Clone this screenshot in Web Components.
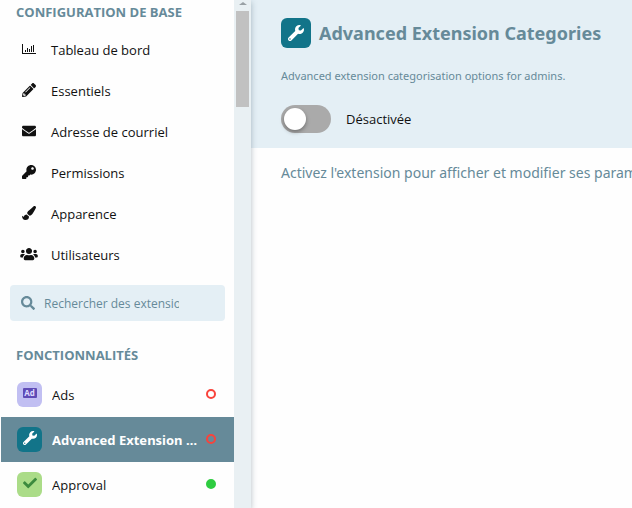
<!DOCTYPE html>
<html lang="fr">
<head>
<meta charset="utf-8">
<meta name="viewport" content="width=device-width, initial-scale=1">
<title>Advanced Extension Categories</title>
<style>
  :root {
    --muted: #668a99;
    --control: #e4eff5;
    --text: #111;
    --off: #f9433b;
    --on: #2ecc40;
  }
  body {
    margin: 0;
    background: #fefefe;
    color: var(--text);
    font: 13px/20px "Open Sans", "Noto Sans", sans-serif;
  }
</style>
</head>
<body>
<admin-page>
  <admin-sidebar slot="nav">
    <nav-title>Configuration de base</nav-title>
    <nav-link icon="chart">Tableau de bord</nav-link>
    <nav-link icon="pencil">Essentiels</nav-link>
    <nav-link icon="envelope">Adresse de courriel</nav-link>
    <nav-link icon="key">Permissions</nav-link>
    <nav-link icon="brush">Apparence</nav-link>
    <nav-link icon="users">Utilisateurs</nav-link>
    <search-box placeholder="Rechercher des extensions"></search-box>
    <nav-title>Fonctionnalités</nav-title>
    <extension-link icon="ad" style="--tile: #c1bff2; --glyph: #5f4bb6">Ads</extension-link>
    <extension-link icon="wrench" active style="--tile: #127489; --glyph: #fff">Advanced Extension Categories</extension-link>
    <extension-link icon="check" enabled style="--tile: #abdc88; --glyph: #3c8a3e">Approval</extension-link>
  </admin-sidebar>
  <extension-header>
    <span slot="title">Advanced Extension Categories</span>
    <span slot="description">Advanced extension categorisation options for admins.</span>
    <toggle-switch slot="controls">Désactivée</toggle-switch>
  </extension-header>
  <extension-notice>Activez l'extension pour afficher et modifier ses paramètres.</extension-notice>
</admin-page>

<script>
const ICONS = {
  chart: ["0 0 14 14", '<path d="M0 2h1v9h13v1H0zM3 8h1v2H3zM5 6h1v4H5zM7 7h1v3H7zM9 4h1v6H9zM11 3h1v7h-1z"/>'],
  pencil: ["0 0 512 512", '<path d="M497.9 142.1l-46.1 46.1c-4.7 4.7-12.3 4.7-17 0l-111-111c-4.7-4.7-4.7-12.3 0-17l46.1-46.1c18.7-18.7 49.1-18.7 67.9 0l60.1 60.1c18.8 18.7 18.8 49.1 0 67.9zM284.2 99.8L21.6 362.4.4 483.9c-2.9 16.4 11.4 30.6 27.8 27.8l121.5-21.3 262.6-262.6c4.7-4.7 4.7-12.3 0-17l-111-111c-4.8-4.7-12.4-4.7-17.1 0zM124.1 339.9c-5.5-5.5-5.5-14.3 0-19.8l154-154c5.5-5.5 14.3-5.5 19.8 0s5.5 14.3 0 19.8l-154 154c-5.5 5.5-14.3 5.5-19.8 0zM88 424h48v36.3l-64.5 11.3-31.1-31.1L51.7 376H88v48z"/>'],
  envelope: ["0 0 512 512", '<path d="M502.3 190.8c3.9-3.1 9.7-.2 9.7 4.7V400c0 26.5-21.5 48-48 48H48c-26.5 0-48-21.5-48-48V195.6c0-5 5.7-7.8 9.7-4.7 22.4 17.4 52.1 39.5 154.1 113.6 21.1 15.4 56.7 47.8 92.2 47.6 35.7.3 72-32.8 92.3-47.6 102-74.1 131.6-96.3 154-113.7zM256 320c23.2.4 56.6-29.2 73.4-41.4 132.7-96.3 142.8-104.7 173.4-128.7 5.8-4.5 9.2-11.5 9.2-18.9v-19c0-26.5-21.5-48-48-48H48c-26.5 0-48 21.5-48 48v19c0 7.4 3.4 14.3 9.2 18.9 30.6 23.9 40.7 32.4 173.4 128.7 16.8 12.2 50.2 41.8 73.4 41.4z"/>'],
  key: ["0 0 512 512", '<path d="M512 176.001C512 273.203 433.202 352 336 352c-11.22 0-22.19-1.062-32.827-3.069l-24.012 27.014A23.999 23.999 0 0 1 261.223 384H224v40c0 13.255-10.745 24-24 24h-40v40c0 13.255-10.745 24-24 24H24c-13.255 0-24-10.745-24-24v-78.059c0-6.365 2.529-12.47 7.029-16.971l161.802-161.802C163.108 213.814 160 195.271 160 176 160 78.798 238.797.001 335.999 0 433.488-.001 512 78.511 512 176.001zM336 128c0 26.51 21.49 48 48 48s48-21.49 48-48-21.49-48-48-48-48 21.49-48 48z"/>'],
  brush: ["0 0 512 512", '<path d="M167.02 309.34c-40.12 2.58-76.53 17.86-97.19 72.3-2.35 6.21-8 9.98-14.59 9.98-11.11 0-45.46-27.67-55.25-34.35C0 439.62 37.93 512 128 512c75.86 0 128-43.77 128-120.19 0-3.11-.65-6.08-.97-9.13l-88.01-73.34zM457.89 0c-15.16 0-29.37 6.71-40.21 16.45C213.27 199.05 192 203.34 192 257.09c0 13.7 3.25 26.76 8.73 38.7l63.82 53.18c7.21 1.8 14.64 3.03 22.39 3.03 62.11 0 98.11-45.47 211.16-256.46 7.38-14.35 13.9-29.85 13.9-45.99C512 20.64 486 0 457.89 0z"/>'],
  users: ["0 0 640 512", '<path d="M96 224c35.3 0 64-28.7 64-64s-28.7-64-64-64-64 28.7-64 64 28.7 64 64 64zm448 0c35.3 0 64-28.7 64-64s-28.7-64-64-64-64 28.7-64 64 28.7 64 64 64zm32 32h-64c-17.6 0-33.5 7.1-45.1 18.6 40.3 22.1 68.9 62 75.1 109.4h66c17.7 0 32-14.3 32-32v-32c0-35.3-28.7-64-64-64zm-256 0c61.9 0 112-50.1 112-112S381.9 32 320 32 208 82.1 208 144s50.1 112 112 112zm76.8 32h-8.3c-20.8 10-43.9 16-68.5 16s-47.6-6-68.5-16h-8.3C179.6 288 128 339.6 128 403.2V432c0 26.5 21.5 48 48 48h288c26.5 0 48-21.5 48-48v-28.8c0-63.6-51.6-115.2-115.2-115.2zm-223.7-13.4C161.5 263.1 145.6 256 128 256H64c-35.3 0-64 28.7-64 64v32c0 17.7 14.3 32 32 32h65.9c6.3-47.4 34.9-87.3 75.2-109.4z"/>'],
  search: ["0 0 512 512", '<path d="M505 442.7L405.3 343c-4.5-4.5-10.6-7-17-7H372c27.6-35.3 44-79.7 44-128C416 93.1 322.9 0 208 0S0 93.1 0 208s93.1 208 208 208c48.3 0 92.7-16.4 128-44v16.3c0 6.4 2.5 12.5 7 17l99.7 99.7c9.4 9.4 24.6 9.4 33.9 0l28.3-28.3c9.4-9.4 9.4-24.6.1-34zM208 336c-70.7 0-128-57.2-128-128 0-70.7 57.2-128 128-128 70.7 0 128 57.2 128 128 0 70.7-57.2 128-128 128z"/>'],
  wrench: ["0 0 512 512", '<path d="M507.73 109.1c-2.24-9.03-13.54-12.09-20.12-5.51l-74.36 74.36-67.88-11.31-11.31-67.88 74.36-74.36c6.62-6.62 3.43-17.9-5.66-20.16-47.38-11.74-99.55.91-136.58 37.93-39.64 39.64-50.55 97.1-34.05 147.2L18.74 402.76c-24.99 24.99-24.99 65.51 0 90.5 24.99 24.99 65.51 24.99 90.5 0l213.21-213.21c50.12 16.71 107.47 5.68 147.37-34.22 37.07-37.07 49.7-89.32 37.91-136.73zM64 472c-13.25 0-24-10.75-24-24 0-13.26 10.75-24 24-24s24 10.74 24 24c0 13.25-10.75 24-24 24z"/>'],
  check: ["0 0 512 512", '<path d="M173.898 439.404l-166.4-166.4c-9.997-9.997-9.997-26.206 0-36.204l36.203-36.204c9.997-9.998 26.207-9.998 36.204 0L192 312.69 432.095 72.596c9.997-9.997 26.207-9.997 36.204 0l36.203 36.204c9.997 9.997 9.997 26.206 0 36.204l-294.4 294.401c-9.998 9.997-26.207 9.997-36.204-.001z"/>'],
};

class BaseElement extends HTMLElement {
  constructor() {
    super();
    this._shadowRoot = this.attachShadow({ mode: "open" });
  }

  connectedCallback() {
    this._shadowRoot.innerHTML = this.render();
  }
}

class AppIcon extends BaseElement {
  render() {
    const name = this.getAttribute("name");
    const style = `
      <style>
        :host { display: block; flex: none; width: var(--icon-size, 14px); height: var(--icon-size, 14px); }
        svg { display: block; width: 100%; height: 100%; fill: currentColor; overflow: visible; }
        .ad {
          display: grid;
          place-items: center;
          height: 10px;
          margin-top: 2px;
          border-radius: 1px;
          background: currentColor;
          font-size: 8px;
          line-height: 10px;
          font-weight: 700;
        }
        .ad span { color: #dedcff; }
      </style>`;
    if (name === "ad") {
      return `${style}<div class="ad"><span>Ad</span></div>`;
    }
    // wide glyphs keep the full height and spill over the sides
    const [box, shape] = ICONS[name];
    return `${style}<svg viewBox="${box}" preserveAspectRatio="xMidYMid slice" aria-hidden="true">${shape}</svg>`;
  }
}

class AdminPage extends BaseElement {
  render() {
    return `
      <style>
        :host { display: grid; grid-template-columns: 251px minmax(0, 1fr); height: 100vh; overflow: hidden; }
        main { overflow: hidden; }
      </style>
      <slot name="nav"></slot>
      <main><slot></slot></main>`;
  }
}

class AdminSidebar extends BaseElement {
  render() {
    return `
      <style>
        :host {
          display: grid;
          grid-template-columns: minmax(0, 1fr) 17px;
          min-height: 0;
          z-index: 1;
          box-shadow: 0 2px 6px rgba(40, 70, 90, 0.35);
        }
        nav { padding-left: 1px; }
        .scrollbar {
          display: flex;
          flex-direction: column;
          align-items: center;
          gap: 6px;
          padding-top: 2px;
          background: #e9f0f3;
        }
        .arrow { border: 4px solid transparent; border-top: 0; border-bottom: 3px solid #99a0a4; }
        .thumb { width: 13px; height: 96px; background: #c1c1c1; }
      </style>
      <nav><slot></slot></nav>
      <div class="scrollbar" aria-hidden="true">
        <div class="arrow"></div>
        <div class="thumb"></div>
      </div>`;
  }
}

class NavTitle extends BaseElement {
  render() {
    return `
      <style>
        :host { display: block; }
        h4 {
          margin: 0;
          padding: 0 15px 5px;
          color: var(--muted);
          font-size: 13px;
          line-height: 24px;
          font-weight: 700;
          text-transform: uppercase;
        }
      </style>
      <h4><slot></slot></h4>`;
  }
}

class NavLink extends BaseElement {
  render() {
    return `
      <style>
        :host { display: block; }
        a {
          display: flex;
          align-items: center;
          gap: 15px;
          height: 41px;
          padding: 0 21px;
          color: inherit;
          text-decoration: none;
        }
        app-icon { margin-bottom: 2px; }
      </style>
      <a href="#"><app-icon name="${this.getAttribute("icon")}"></app-icon><span><slot></slot></span></a>`;
  }
}

class SearchBox extends BaseElement {
  render() {
    return `
      <style>
        :host { display: block; padding: 10px 9px 22px; }
        label {
          display: flex;
          align-items: center;
          gap: 9px;
          height: 36px;
          padding: 0 46px 0 11px;
          border-radius: 4px;
          background: var(--control);
          color: var(--muted);
        }
        input {
          flex: 1;
          min-width: 0;
          padding: 2px 0 0;
          border: 0;
          outline: 0;
          background: none;
          color: inherit;
          font: inherit;
          font-size: 12px;
        }
        input::placeholder { color: inherit; opacity: 1; }
      </style>
      <label>
        <app-icon name="search"></app-icon>
        <input type="text" aria-label="${this.getAttribute("placeholder")}" placeholder="${this.getAttribute("placeholder")}">
      </label>`;
  }
}

class IconTile extends BaseElement {
  render() {
    return `
      <style>
        :host {
          display: grid;
          place-items: center;
          flex: none;
          box-sizing: border-box;
          width: var(--tile-size, 25px);
          height: var(--tile-size, 25px);
          padding-bottom: var(--tile-lift, 3px);
          border-radius: 6px;
          background: var(--tile);
          color: var(--glyph);
        }
      </style>
      <app-icon name="${this.getAttribute("icon")}"></app-icon>`;
  }
}

class ExtensionLink extends BaseElement {
  render() {
    return `
      <style>
        :host { display: block; }
        :host([active]) {
          background: var(--muted);
          color: #fff;
          font-family: "Noto Sans", sans-serif;
          font-weight: 700;
        }
        a {
          display: flex;
          align-items: center;
          height: 45px;
          padding: 0 18px 0 16px;
          color: inherit;
          text-decoration: none;
        }
        icon-tile { margin-right: 10px; }
        .label { flex: 1; overflow: hidden; white-space: nowrap; text-overflow: ellipsis; }
        .status {
          box-sizing: border-box;
          width: 10px;
          height: 10px;
          margin: 0 0 2px 4px;
          border: 2px solid var(--off);
          border-radius: 50%;
        }
        :host([enabled]) .status { border-color: var(--on); background: var(--on); }
      </style>
      <a href="#">
        <icon-tile icon="${this.getAttribute("icon")}"></icon-tile>
        <span class="label"><slot></slot></span>
        <span class="status"></span>
      </a>`;
  }
}

class ExtensionHeader extends BaseElement {
  render() {
    return `
      <style>
        :host { display: block; }
        header { padding: 18px 30px 15px; background: var(--control); color: var(--muted); }
        .title { display: flex; align-items: center; gap: 8px; }
        icon-tile { --tile-size: 30px; --tile-lift: 0; --icon-size: 16px; --tile: #127489; --glyph: #fff; }
        h2 { margin: 0; font-family: "Noto Sans", sans-serif; font-size: 18px; line-height: 30px; font-weight: 700; white-space: nowrap; }
        p { margin: 18px 0 19px; font-family: "Noto Sans", sans-serif; font-size: 11px; line-height: 20px; }
      </style>
      <header>
        <div class="title">
          <icon-tile icon="wrench"></icon-tile>
          <h2><slot name="title"></slot></h2>
        </div>
        <p><slot name="description"></slot></p>
        <slot name="controls"></slot>
      </header>`;
  }
}

class ToggleSwitch extends BaseElement {
  render() {
    return `
      <style>
        :host { display: block; color: var(--text); }
        label { display: flex; align-items: center; gap: 15px; }
        input {
          appearance: none;
          display: flex;
          flex: none;
          box-sizing: border-box;
          width: 50px;
          height: 28px;
          margin: 0;
          padding: 3px;
          border-radius: 14px;
          background: #aaa;
        }
        input::before {
          content: "";
          width: 22px;
          height: 22px;
          border-radius: 50%;
          background: #fff;
          box-shadow: 0 2px 4px rgba(0, 0, 0, 0.35);
        }
        input:checked { justify-content: flex-end; background: var(--on); }
      </style>
      <label><input type="checkbox" role="switch"><span><slot></slot></span></label>`;
  }
}

class ExtensionNotice extends BaseElement {
  render() {
    return `
      <style>
        :host {
          display: block;
          padding: 14px 0 14px 30px;
          color: var(--muted);
          font-family: "Noto Sans", sans-serif;
          font-size: 14px;
          line-height: 22px;
          white-space: nowrap;
        }
      </style>
      <slot></slot>`;
  }
}

customElements.define("app-icon", AppIcon);
customElements.define("icon-tile", IconTile);
customElements.define("admin-page", AdminPage);
customElements.define("admin-sidebar", AdminSidebar);
customElements.define("nav-title", NavTitle);
customElements.define("nav-link", NavLink);
customElements.define("search-box", SearchBox);
customElements.define("extension-link", ExtensionLink);
customElements.define("extension-header", ExtensionHeader);
customElements.define("toggle-switch", ToggleSwitch);
customElements.define("extension-notice", ExtensionNotice);
</script>
</body>
</html>
